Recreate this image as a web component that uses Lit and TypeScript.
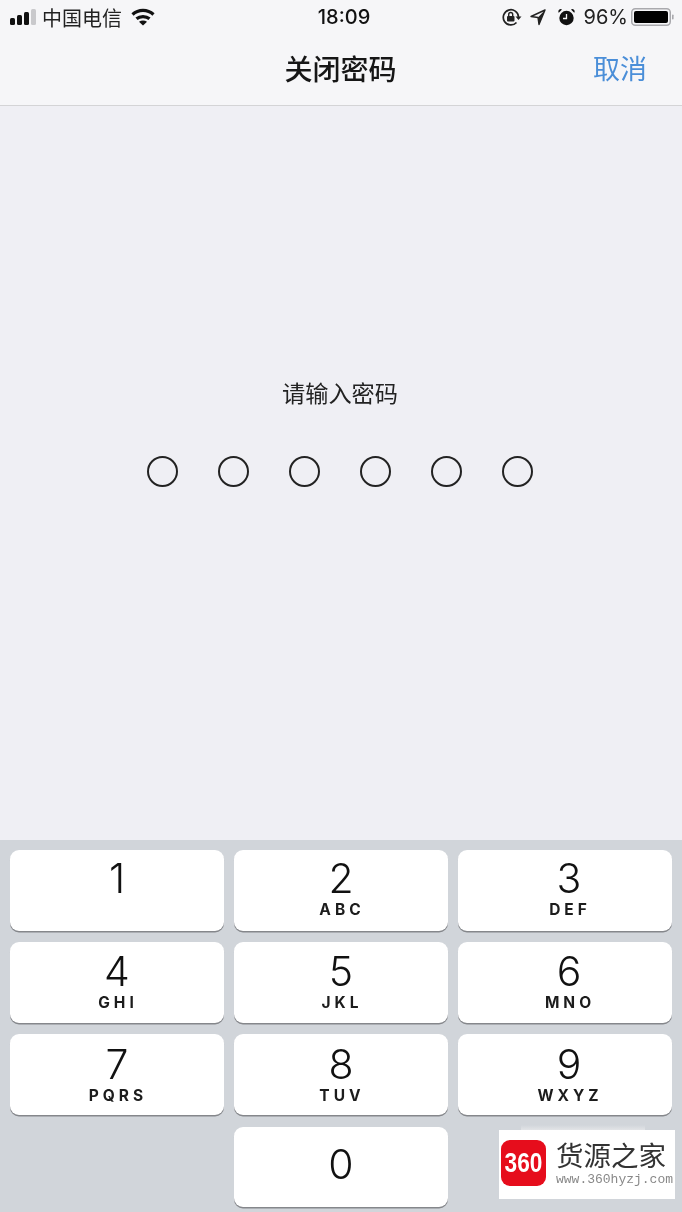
import { LitElement, html, css } from 'lit';
import { customElement } from 'lit/decorators.js';

const keys = [
  ['1', ''], ['2', 'ABC'], ['3', 'DEF'],
  ['4', 'GHI'], ['5', 'JKL'], ['6', 'MNO'],
  ['7', 'PQRS'], ['8', 'TUV'], ['9', 'WXYZ'],
  ['', ''], ['0', ''], ['', ''],
];

@customElement('app-root')
export class AppRoot extends LitElement {
  static styles = css`
    :host {
      display: flex;
      flex-direction: column;
      position: relative;
      width: 682px;
      height: 1212px;
      overflow: hidden;
      background: #efeff4;
      color: #111;
      font-family: Inter, "Noto Sans CJK SC", sans-serif;
      filter: blur(0.4px);
    }

    .nav {
      height: 106px;
      flex: none;
      box-sizing: border-box;
      background: #f6f6f8;
      border-bottom: 1px solid #d4d4d6;
    }

    .status {
      height: 34px;
      display: grid;
      grid-template-columns: 1fr auto 1fr;
      align-items: center;
      padding: 0 8px 0 10px;
    }

    .status__left,
    .status__right {
      display: flex;
      align-items: center;
    }

    .status__right {
      justify-content: flex-end;
    }

    .carrier {
      margin-left: 6px;
      font-size: 20px;
      color: #222;
      font-family: "Noto Sans CJK SC", sans-serif;
    }

    .wifi {
      margin-left: 9px;
    }

    .time {
      font-size: 20px;
      font-weight: 500;
      padding-left: 4px;
    }

    .percent {
      margin: 0 3px 0 9px;
      font-size: 20px;
      color: #222;
    }

    .nav__bar {
      height: 69px;
      padding-bottom: 2px;
      box-sizing: border-box;
      display: flex;
      align-items: center;
      justify-content: center;
      position: relative;
      font-family: "Noto Sans CJK SC", sans-serif;
    }

    .nav__title {
      font-size: 28px;
      font-weight: 500;
      color: #161616;
      margin-left: -1px;
    }

    .nav__cancel {
      position: absolute;
      right: 35px;
      font-size: 27px;
      color: #4a8ed8;
    }

    .main {
      flex: 1;
      display: flex;
      flex-direction: column;
      align-items: center;
      padding-top: 269px;
      padding-right: 2px;
    }

    .prompt {
      font-family: "Noto Sans CJK SC", sans-serif;
      font-size: 23.2px;
      line-height: 34px;
      color: #222;
    }

    .dots {
      display: flex;
      gap: 40px;
      margin-top: 47px;
    }

    .dot {
      width: 31px;
      height: 31px;
      box-sizing: border-box;
      border: 2px solid #222;
      border-radius: 50%;
    }

    .keypad {
      flex: none;
      height: 372px;
      box-sizing: border-box;
      padding: 10px 10px 0;
      background: #d1d5da;
      display: grid;
      grid-template-columns: repeat(3, 214px);
      grid-auto-rows: 81px;
      gap: 11px 10px;
    }

    .key {
      display: flex;
      flex-direction: column;
      align-items: center;
      box-sizing: border-box;
      background: #fff;
      border-radius: 9px;
      box-shadow: 0 1.5px 0.5px #85878b;
    }

    .key:nth-child(3n) {
      padding-left: 8px;
    }

    .key:nth-child(n+7) {
      padding-top: 1px;
    }

    .key--empty {
      background: transparent;
      box-shadow: none;
    }

    .key--lower .key__digit {
      margin-top: 6px;
    }

    .key--zero {
      justify-content: center;
      margin-top: 1px;
      padding-bottom: 8px;
    }

    .key--zero .key__digit {
      margin-top: 0;
    }

    .key__digit {
      margin-top: 5px;
      font-size: 41px;
      line-height: 46px;
      font-weight: 350;
    }

    .key__letters {
      font-size: 15.5px;
      line-height: 18px;
      font-weight: 700;
      letter-spacing: 4px;
      margin-right: -2px;
      color: #1c1c1c;
    }

    .key__letters:empty {
      display: none;
    }

    .mark {
      position: absolute;
      left: 499px;
      top: 1130px;
      width: 176px;
      height: 69px;
      background: #fff;
      display: flex;
      align-items: center;
      padding: 0 0 3px 2px;
      box-sizing: border-box;
    }

    .mark::before {
      content: "";
      position: absolute;
      left: 22px;
      right: 30px;
      top: -5px;
      height: 5px;
      background: linear-gradient(#d1d5da00, #e2e4e7);
    }

    .mark__logo {
      width: 45px;
      height: 46px;
      border-radius: 9px;
      background: #e60d1c;
      color: #fff;
      font: 700 27px/46px "Liberation Sans", sans-serif;
      text-align: center;
    }

    .mark__digits {
      display: inline-block;
      transform: scaleX(0.84);
    }

    .mark__text {
      margin-left: 10px;
      display: flex;
      flex-direction: column;
    }

    .mark__name {
      font-family: "Noto Sans CJK SC", sans-serif;
      font-size: 27.5px;
      line-height: 32px;
      color: #333;
      white-space: nowrap;
    }

    .mark__url {
      font-family: "Liberation Mono", monospace;
      font-size: 13px;
      line-height: 17px;
      padding-top: 1px;
      color: #888;
      white-space: nowrap;
    }
  `;

  renderSignal() {
    return html`
      <svg width="26" height="18" viewBox="0 0 26 18">
        <rect x="0" y="10" width="5" height="7" rx="1.5" fill="#111" />
        <rect x="7" y="7" width="5" height="10" rx="1.5" fill="#111" />
        <rect x="14" y="4" width="5" height="13" rx="1.5" fill="#111" />
        <rect x="21" y="1" width="5" height="16" rx="1.5" fill="#c9c9cc" />
      </svg>
    `;
  }

  renderWifi() {
    return html`
      <svg class="wifi" width="24" height="18" viewBox="0 0 24 18" fill="none" stroke="#111" stroke-width="3.2">
        <path d="M1.5 6.5C7.5 1 16.5 1 22.5 6.5" />
        <path d="M5.5 10.8C9 7.8 15 7.8 18.5 10.8" />
        <path d="M8 13.8L12 17.5L16 13.8C13.5 12 10.5 12 8 13.8Z" fill="#111" stroke="none" />
      </svg>
    `;
  }

  renderRotationLock() {
    return html`
      <svg width="20" height="18" viewBox="0 0 20 18" fill="none" stroke="#222" stroke-width="1.7">
        <path d="M14.5 14.5A7.6 7.6 0 1 1 16.5 9" />
        <path d="M13.5 8.5h6l-3 3.5z" fill="#222" stroke="none" />
        <rect x="5" y="8" width="7.5" height="5.5" rx="1" fill="#222" stroke="none" />
        <path d="M6.7 8V6.5a2 2 0 0 1 4 0V8" stroke-width="1.4" />
      </svg>
    `;
  }

  renderLocation() {
    return html`
      <svg style="margin-left:8px" width="16" height="18" viewBox="0 0 16 18" fill="none" stroke="#222" stroke-width="1.4" stroke-linejoin="round">
        <path d="M15 2L1 8.5L8 9.5L9 16.5Z" />
        <path d="M8 9.5L15 2L9 16.5Z" fill="#222" stroke="none" />
      </svg>
    `;
  }

  renderAlarm() {
    return html`
      <svg style="margin-left:12px" width="17" height="18" viewBox="0 0 17 18">
        <circle cx="8.5" cy="10" r="7.2" fill="#111" />
        <path d="M8.5 6v4.5H5" fill="none" stroke="#f6f6f8" stroke-width="1.3" />
        <path d="M0.8 4.8L4 1.4A2.4 2.4 0 0 0 0.8 4.8ZM16.2 4.8L13 1.4A2.4 2.4 0 0 1 16.2 4.8Z" fill="#111" />
      </svg>
    `;
  }

  renderBattery() {
    return html`
      <svg width="43" height="18" viewBox="0 0 43 18">
        <rect x="0.75" y="0.75" width="38.5" height="16.5" rx="3.5" fill="none" stroke="#a9a9ad" stroke-width="1.5" />
        <rect x="3" y="3" width="34" height="12" rx="2" fill="#000" />
        <rect x="41" y="6.5" width="1.6" height="5" rx="0.8" fill="#a9a9ad" />
      </svg>
    `;
  }

  keyClass(index: number, digit: string) {
    if (digit === '0') return 'key key--zero';
    return index >= 3 ? 'key key--lower' : 'key';
  }

  render() {
    return html`
      <div class="nav">
        <div class="status">
          <div class="status__left">
            ${this.renderSignal()}
            <span class="carrier">中国电信</span>
            ${this.renderWifi()}
          </div>
          <div class="time">18:09</div>
          <div class="status__right">
            ${this.renderRotationLock()}
            ${this.renderLocation()}
            ${this.renderAlarm()}
            <span class="percent">96%</span>
            ${this.renderBattery()}
          </div>
        </div>
        <div class="nav__bar">
          <span class="nav__title">关闭密码</span>
          <span class="nav__cancel">取消</span>
        </div>
      </div>
      <div class="main">
        <div class="prompt">请输入密码</div>
        <div class="dots">
          ${[0, 1, 2, 3, 4, 5].map(() => html`<div class="dot"></div>`)}
        </div>
      </div>
      <div class="keypad">
        ${keys.map(([digit, letters], i) => digit
          ? html`
            <div class=${this.keyClass(i, digit)}>
              <div class="key__digit">${digit}</div>
              <div class="key__letters">${letters}</div>
            </div>`
          : html`<div class="key key--empty"></div>`)}
      </div>
      <div class="mark">
        <div class="mark__logo"><span class="mark__digits">360</span></div>
        <div class="mark__text">
          <div class="mark__name">货源之家</div>
          <div class="mark__url">www.360hyzj.com</div>
        </div>
      </div>
    `;
  }
}
